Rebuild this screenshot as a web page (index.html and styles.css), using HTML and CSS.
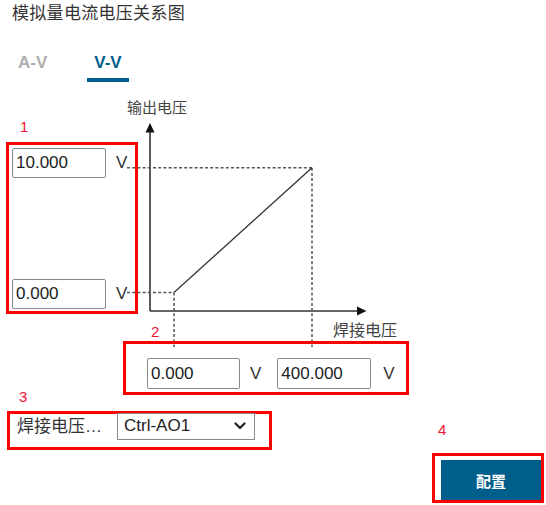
FILE: index.html
```html
<!DOCTYPE html>
<html lang="zh-CN">
<head>
<meta charset="utf-8">
<title>模拟量电流电压关系图</title>
<link rel="stylesheet" href="styles.css">
</head>
<body>
<div class="page">
  <svg class="chart" width="546" height="505" viewBox="0 0 546 505" aria-hidden="true">
    <g class="axis">
      <line x1="150" y1="311" x2="150" y2="131"/>
      <polygon points="150,123 145.5,132.5 154.5,132.5"/>
      <line x1="150" y1="311" x2="358" y2="311"/>
      <polygon points="366.5,311 357,306.5 357,315.5"/>
    </g>
    <g class="dash">
      <line x1="127" y1="167.7" x2="312" y2="167.7"/>
      <line x1="312" y1="167.7" x2="312" y2="347"/>
      <line x1="127" y1="292.5" x2="174" y2="292.5"/>
      <line x1="174" y1="292.5" x2="174" y2="347"/>
    </g>
    <line class="curve" x1="174" y1="292.5" x2="312" y2="167.7"/>
    <text class="axis-label" x="127" y="113">输出电压</text>
    <text class="axis-label x-label" x="333" y="336">焊接电压</text>
  </svg>

  <div class="content">
    <h1 class="title">模拟量电流电压关系图</h1>

    <div class="tabs">
      <div class="tab">A-V</div>
      <div class="tab active">V-V</div>
    </div>

    <div class="group group1">
      <div class="num num1">1</div>
      <div class="mark box1">
        <div class="field"><input class="inp" type="text" value="10.000"><span class="unit">V</span></div>
        <div class="field"><input class="inp" type="text" value="0.000"><span class="unit">V</span></div>
      </div>
    </div>

    <div class="group group2">
      <div class="num num2">2</div>
      <div class="mark box2">
        <input class="inp inp2" type="text" value="0.000"><span class="unit u2a">V</span>
        <input class="inp inp2" type="text" value="400.000"><span class="unit u2b">V</span>
      </div>
    </div>

    <div class="bottom">
      <div class="group group3">
        <div class="num num3">3</div>
        <div class="mark box3">
          <span class="sel-label">焊接电压…</span>
          <div class="select">
            <span>Ctrl-AO1</span>
            <svg class="chev" width="12" height="8" viewBox="0 0 12 8"><polyline points="1.5,1.5 6,6 10.5,1.5"/></svg>
          </div>
        </div>
      </div>
      <div class="group group4">
        <div class="num num4">4</div>
        <div class="mark box4">
          <button class="btn" type="button">配置</button>
        </div>
      </div>
    </div>
  </div>
</div>
</body>
</html>
```

FILE: styles.css
```css
* { box-sizing: border-box; }

html, body {
  margin: 0;
  padding: 0;
  background: #fff;
}

body {
  font-family: "Liberation Sans", "Noto Sans CJK SC", sans-serif;
  color: #333;
}

.page {
  position: relative;
  width: 546px;
  height: 505px;
  overflow: hidden;
}

.chart {
  position: absolute;
  left: 0;
  top: 0;
  z-index: 0;
  pointer-events: none;
}

.axis line { stroke: #333; stroke-width: 1.6; }
.axis polygon { fill: #111; }
.dash line { stroke: #555; stroke-width: 1.5; stroke-dasharray: 3 2.2; }
.curve { stroke: #333; stroke-width: 1.3; }
.axis-label {
  font-family: "Noto Sans CJK SC", sans-serif;
  font-size: 15px;
  fill: #444;
}
.x-label { font-size: 16px; }

.content {
  position: relative;
  z-index: 1;
}

.title {
  margin: 2px 0 0 12px;
  font-size: 17px;
  line-height: 24px;
  font-weight: normal;
  color: #333;
  letter-spacing: 0.3px;
}

.tabs {
  display: flex;
  gap: 33px;
  margin: 27px 0 0 11px;
}

.tab {
  padding: 0 7px 5px;
  font-size: 17px;
  line-height: 20px;
  font-weight: bold;
  color: #aeaeae;
  border-bottom: 4px solid transparent;
}

.tab.active {
  color: #005e8a;
  border-bottom-color: #005e8a;
}

.num {
  font-size: 15px;
  line-height: 18px;
  color: #ee1133;
}

.mark {
  border: 3px solid #ff0000;
}

.inp {
  width: 94px;
  height: 30px;
  border: 1px solid #8a8a8a;
  border-radius: 2px;
  padding: 0 3px;
  font-family: "Liberation Sans", sans-serif;
  font-size: 17px;
  color: #222;
  background: #fff;
  outline: none;
}

.unit {
  font-size: 17px;
  color: #333;
}

/* group 1 */
.group1 {
  margin: 36px 0 0 6px;
  width: 132px;
}
.num1 { padding-left: 14px; }
.box1 {
  margin-top: 6px;
  height: 172px;
  padding: 3px 3px 2px 3px;
  display: flex;
  flex-direction: column;
  justify-content: space-between;
}
.field {
  display: flex;
  align-items: center;
  gap: 10px;
}
.field .inp:last-of-type { }

/* group 2 */
.group2 {
  margin: 9px 0 0 123px;
  width: 286px;
}
.num2 { padding-left: 28px; }
.box2 {
  height: 54px;
  padding: 14px 0 3px 21px;
  display: flex;
  align-items: center;
}
.inp2 { height: 31px; }
.inp2:first-child { width: 93px; }
.u2a { margin: 0 16px 0 10px; }
.u2b { margin-left: 12px; }

/* bottom row */
.bottom {
  display: flex;
  align-items: flex-start;
  margin-top: -7px;
}

.group3 {
  margin-left: 7px;
  width: 265px;
}
.num3 { padding-left: 12px; }
.box3 {
  margin-top: 5px;
  height: 39px;
  padding: 0 0 0 7px;
  display: flex;
  align-items: center;
  align-content: flex-start;
}
.box3 > * { margin-top: -9px; }

.sel-label {
  width: 100px;
  font-size: 17px;
  line-height: 27px;
  color: #333;
  white-space: nowrap;
}

.select {
  width: 138px;
  height: 27px;
  border: 1px solid #8a8a8a;
  display: flex;
  align-items: center;
  justify-content: space-between;
  padding: 0 8px 0 6px;
  font-size: 17px;
  color: #222;
  background: #fff;
}

.chev polyline {
  fill: none;
  stroke: #222;
  stroke-width: 2.2;
  stroke-linecap: round;
  stroke-linejoin: round;
}

.group4 {
  margin: 33px 2px 0 auto;
  width: 112px;
}
.num4 { padding-left: 6px; }
.box4 {
  margin-top: 14px;
  height: 50px;
  padding: 4px 0 0 6px;
}

.btn {
  display: block;
  width: 100px;
  height: 40px;
  border: none;
  background: #005e8a;
  color: #fff;
  font-family: "Noto Sans CJK SC", sans-serif;
  font-size: 15px;
  font-weight: bold;
  padding: 0;
}
```
